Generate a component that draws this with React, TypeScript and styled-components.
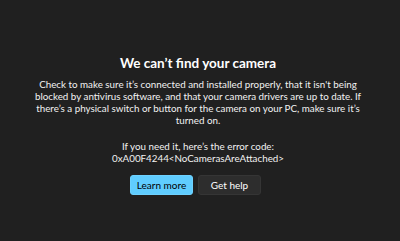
import React from 'react'
import styled, { createGlobalStyle } from 'styled-components'

const Global = createGlobalStyle`
  html, body {
    margin: 0;
    padding: 0;
    background: #202020;
  }
  body {
    font-family: Lato, "Noto Sans", "Liberation Sans", sans-serif;
    color: #ffffff;
  }
`

const Page = styled.div`
  height: 241px;
  box-sizing: border-box;
  padding: 54px 4px 0 0;
  display: flex;
  flex-direction: column;
  align-items: center;
  background: #202020;
`

const Title = styled.h1`
  margin: 0;
  font-size: 13.5px;
  line-height: 18px;
  font-weight: 700;
`

const Text = styled.p<{ $top: number }>`
  margin: ${p => p.$top}px 0 0;
  font-size: 9.8px;
  line-height: 12px;
  text-align: center;
  color: #f2f2f2;
`

const Buttons = styled.div`
  margin-top: 11px;
  padding-right: 5px;
  display: flex;
  gap: 5px;
`

const Button = styled.button<{ $primary?: boolean }>`
  width: 63px;
  height: 20px;
  box-sizing: border-box;
  border-radius: 3px;
  font-family: inherit;
  font-size: 10px;
  padding: 0;
  cursor: pointer;
  background: ${p => (p.$primary ? '#60cdff' : '#2d2d2d')};
  color: ${p => (p.$primary ? '#000000' : '#ffffff')};
  border: 1px solid ${p => (p.$primary ? '#6ed2ff' : '#353535')};
`

const App = () => (
  <>
    <Global />
    <Page>
      <Title>We can’t find your camera</Title>
      <Text $top={6}>
        Check to make sure it’s connected and installed properly, that it isn't being
        <br />
        blocked by antivirus software, and that your camera drivers are up to date. If
        <br />
        there’s a physical switch or button for the camera on your PC, make sure it’s
        <br />
        turned on.
      </Text>
      <Text $top={14}>
        If you need it, here’s the error code:
        <br />
        0xA00F4244&lt;NoCamerasAreAttached&gt;
      </Text>
      <Buttons>
        <Button $primary>Learn more</Button>
        <Button>Get help</Button>
      </Buttons>
    </Page>
  </>
)

export default App
